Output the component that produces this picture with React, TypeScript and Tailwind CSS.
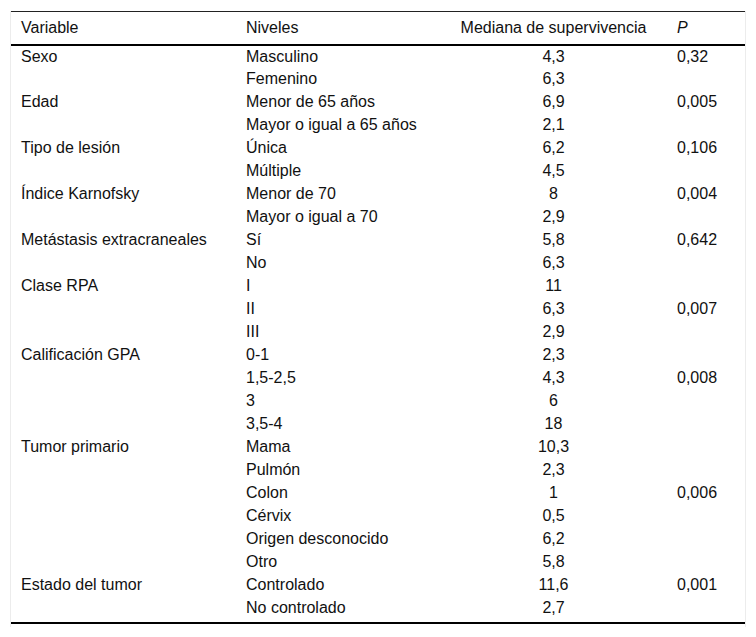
const rows: [string, string, string, string][] = [
  ['Sexo', 'Masculino', '4,3', '0,32'],
  ['', 'Femenino', '6,3', ''],
  ['Edad', 'Menor de 65 años', '6,9', '0,005'],
  ['', 'Mayor o igual a 65 años', '2,1', ''],
  ['Tipo de lesión', 'Única', '6,2', '0,106'],
  ['', 'Múltiple', '4,5', ''],
  ['Índice Karnofsky', 'Menor de 70', '8', '0,004'],
  ['', 'Mayor o igual a 70', '2,9', ''],
  ['Metástasis extracraneales', 'Sí', '5,8', '0,642'],
  ['', 'No', '6,3', ''],
  ['Clase RPA', 'I', '11', ''],
  ['', 'II', '6,3', '0,007'],
  ['', 'III', '2,9', ''],
  ['Calificación GPA', '0-1', '2,3', ''],
  ['', '1,5-2,5', '4,3', '0,008'],
  ['', '3', '6', ''],
  ['', '3,5-4', '18', ''],
  ['Tumor primario', 'Mama', '10,3', ''],
  ['', 'Pulmón', '2,3', ''],
  ['', 'Colon', '1', '0,006'],
  ['', 'Cérvix', '0,5', ''],
  ['', 'Origen desconocido', '6,2', ''],
  ['', 'Otro', '5,8', ''],
  ['Estado del tumor', 'Controlado', '11,6', '0,001'],
  ['', 'No controlado', '2,7', ''],
]

export default function App() {
  return (
    <div className="w-[756px] h-[637px] bg-white pt-[11px] pl-[10px] font-['Liberation_Sans',Arial,sans-serif] text-[16px] leading-[18px] text-[#111]">
      <div className="w-[736px] border-x border-[#ececec] pb-[3px]">
        <table className="w-[734px] border-collapse table-fixed">
          <colgroup>
            <col className="w-[225px]" />
            <col className="w-[204px]" />
            <col className="w-[227px]" />
            <col className="w-[78px]" />
          </colgroup>
          <thead>
            <tr className="h-[33px] border-t border-t-[#222] border-b-2 border-b-black">
              <th className="text-left font-normal pl-[10px] align-middle">Variable</th>
              <th className="text-left font-normal pl-[10px] align-middle">Niveles</th>
              <th className="text-center font-normal align-middle">Mediana de supervivencia</th>
              <th className="text-left font-normal italic pl-[10px] align-middle">P</th>
            </tr>
          </thead>
          <tbody className="border-b-2 border-b-black">
            {rows.map((r, i) => {
              const last = i === rows.length - 1
              return (
                <tr key={i} className={last ? 'h-[25px]' : 'h-[23px]'}>
                  <td className={`pl-[10px] align-top ${last ? 'pt-[2px] pb-[5px]' : 'pt-[2px]'}`}>{r[0]}</td>
                  <td className={`pl-[10px] align-top ${last ? 'pt-[2px] pb-[5px]' : 'pt-[2px]'}`}>{r[1]}</td>
                  <td className={`text-center align-top ${last ? 'pt-[2px] pb-[5px]' : 'pt-[2px]'}`}>{r[2]}</td>
                  <td className={`pl-[10px] align-top ${last ? 'pt-[2px] pb-[5px]' : 'pt-[2px]'}`}>{r[3]}</td>
                </tr>
              )
            })}
          </tbody>
        </table>
      </div>
    </div>
  )
}
